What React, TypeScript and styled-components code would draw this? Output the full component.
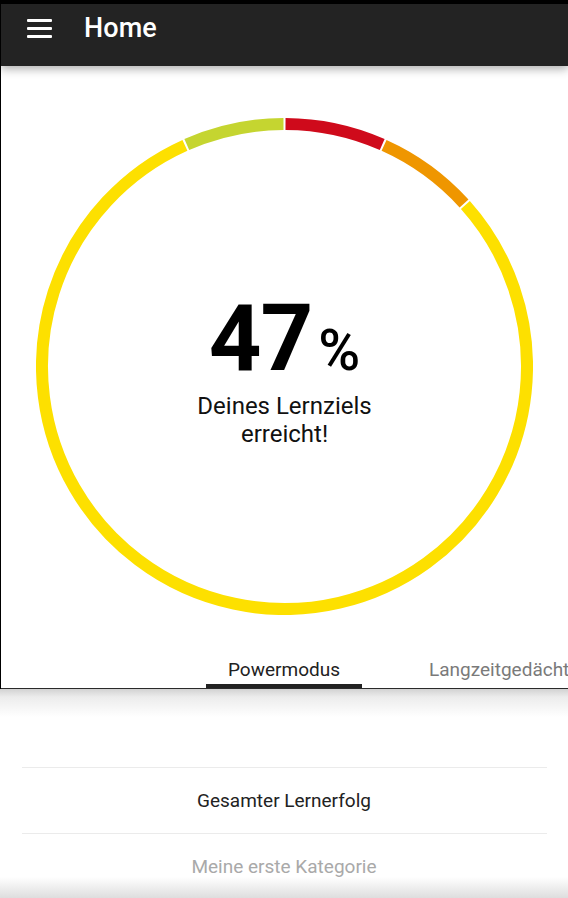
import React from "react";
import styled, { createGlobalStyle } from "styled-components";

const GlobalStyle = createGlobalStyle`
  html, body {
    margin: 0;
    padding: 0;
    background: #ffffff;
  }
  body {
    font-family: Roboto, "Noto Sans", "Liberation Sans", sans-serif;
    -webkit-font-smoothing: antialiased;
  }
  * { box-sizing: border-box; }
`;

const Screen = styled.div`
  width: 568px;
  height: 898px;
  display: flex;
  flex-direction: column;
  overflow: hidden;
  background: #fff;
`;

const UpperPanel = styled.div`
  display: flex;
  flex-direction: column;
  border-left: 1px solid #000;
  border-top: 4px solid #000;
`;

const AppBar = styled.header`
  position: relative;
  z-index: 2;
  height: 62px;
  background: #232323;
  box-shadow: 0 3px 9px rgba(0, 0, 0, 0.32);
`;

const Toolbar = styled.div`
  height: 48px;
  display: flex;
  align-items: center;
  padding-left: 26px;
  gap: 32px;
`;

const MenuButton = styled.div`
  width: 25px;
  height: 19px;
  display: flex;
  flex-direction: column;
  justify-content: space-between;
`;

const MenuLine = styled.span`
  display: block;
  height: 3px;
  background: #fff;
  border-radius: 1px;
`;

const Title = styled.h1`
  margin: 0;
  color: #fff;
  font-size: 27px;
  font-weight: 500;
  letter-spacing: 0.1px;
`;

const ChartArea = styled.section`
  display: flex;
  justify-content: center;
  padding-top: 52px;
  padding-bottom: 26px;
  background: #fff;
`;

const Gauge = styled.div`
  display: grid;
  width: 497px;
  height: 497px;
  & > * {
    grid-area: 1 / 1;
  }
`;

const Center = styled.div`
  display: flex;
  flex-direction: column;
  align-items: center;
  justify-content: center;
  padding-top: 7px;
  color: #000;
`;

const Value = styled.div`
  display: flex;
  align-items: baseline;
  line-height: 1;
`;

const Number = styled.span`
  font-size: 92px;
  font-weight: 700;
  line-height: 92px;
  letter-spacing: -1px;
`;

const Percent = styled.span`
  font-size: 57px;
  font-weight: 500;
  margin-left: 6px;
`;

const Caption = styled.p`
  margin: 7px 0 0;
  font-size: 24px;
  line-height: 28px;
  text-align: center;
  color: #111;
`;

const Tabs = styled.nav`
  display: flex;
  height: 48px;
  padding-left: 205px;
  border-bottom: 1px solid #2a2a2a;
  overflow: hidden;
  white-space: nowrap;
  background: #fff;
`;

const Tab = styled.div<{ $active?: boolean; $pad: number }>`
  flex: none;
  padding: 18px ${(p) => p.$pad}px 0;
  font-size: 19px;
  line-height: 22px;
  color: ${(p) => (p.$active ? "#222" : "#7a7a7a")};
  border-bottom: 4px solid ${(p) => (p.$active ? "#222" : "transparent")};
`;

const ListArea = styled.section`
  position: relative;
  flex: 1;
  padding-top: 78px;
  background: linear-gradient(#d2d2d2 0px, #ececec 8px, #ffffff 28px);
  &::after {
    content: "";
    position: absolute;
    left: 0;
    right: 0;
    bottom: 0;
    height: 22px;
    background: linear-gradient(rgba(220, 220, 220, 0), #dcdcdc);
  }
`;

const Divider = styled.hr`
  margin: 0 21px 0 22px;
  border: none;
  border-top: 1px solid #ebebeb;
`;

const Row = styled.div<{ $muted?: boolean }>`
  height: 65px;
  display: flex;
  align-items: center;
  justify-content: center;
  font-size: 19px;
  color: ${(p) => (p.$muted ? "#a9a9a9" : "#222")};
`;

const CX = 248.5;
const CY = 248.5;
const R = 242.5;

function arcPath(a0: number, a1: number) {
  const toXY = (a: number) => {
    const rad = ((a - 90) * Math.PI) / 180;
    return [CX + R * Math.cos(rad), CY + R * Math.sin(rad)];
  };
  const [x0, y0] = toXY(a0);
  const [x1, y1] = toXY(a1);
  const large = a1 - a0 > 180 ? 1 : 0;
  return `M ${x0} ${y0} A ${R} ${R} 0 ${large} 1 ${x1} ${y1}`;
}

const segments = [
  { from: 0, to: 24, color: "#cf0a1b" },
  { from: 24, to: 48, color: "#ef9600" },
  { from: 48, to: 336, color: "#fde000" },
  { from: 336, to: 360, color: "#c5d530" },
];

const GAP = 0.24;

export default function App() {
  return (
    <>
      <GlobalStyle />
      <Screen>
        <UpperPanel>
          <AppBar>
            <Toolbar>
              <MenuButton>
                <MenuLine />
                <MenuLine />
                <MenuLine />
              </MenuButton>
              <Title>Home</Title>
            </Toolbar>
          </AppBar>
          <ChartArea>
            <Gauge>
              <svg width="497" height="497" viewBox="0 0 497 497">
                {segments.map((s) => (
                  <path
                    key={s.from}
                    d={arcPath(s.from + GAP, s.to - GAP)}
                    fill="none"
                    stroke={s.color}
                    strokeWidth={12}
                  />
                ))}
              </svg>
              <Center>
                <Value>
                  <Number>47</Number>
                  <Percent>%</Percent>
                </Value>
                <Caption>
                  Deines Lernziels
                  <br />
                  erreicht!
                </Caption>
              </Center>
            </Gauge>
          </ChartArea>
          <Tabs>
            <Tab $active $pad={22}>Powermodus</Tab>
            <Tab $pad={67}>Langzeitgedächtnis</Tab>
          </Tabs>
        </UpperPanel>
        <ListArea>
          <Divider />
          <Row>Gesamter Lernerfolg</Row>
          <Divider />
          <Row $muted>Meine erste Kategorie</Row>
        </ListArea>
      </Screen>
    </>
  );
}
